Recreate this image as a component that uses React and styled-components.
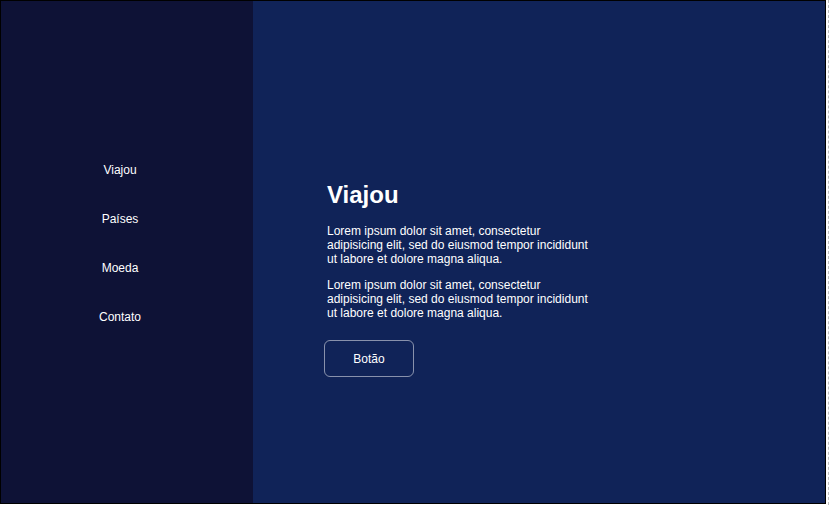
import React from "react";
import styled, { createGlobalStyle } from "styled-components";

const Global = createGlobalStyle`
  html, body { margin: 0; padding: 0; background: #ffffff; }
  body { font-family: "Liberation Sans", Arial, sans-serif; }
  * { box-sizing: border-box; }
`;

const Page = styled.div`
  display: flex;
  align-items: stretch;
  gap: 1px;
  height: 505px;
`;

const Frame = styled.div`
  display: flex;
  width: 826px;
  height: 504px;
  border: 1px solid #000;
`;

const Guide = styled.div`
  width: 0;
  border-left: 1px dashed #bdbdbd;
  margin-left: 1px;
`;

const Sidebar = styled.nav`
  width: 252px;
  flex-shrink: 0;
  background: #0e1236;
  display: flex;
  flex-direction: column;
  align-items: center;
  padding-top: 162px;
  padding-right: 14px;
  gap: 35px;
`;

const NavItem = styled.a`
  color: #ffffff;
  font-size: 12px;
  line-height: 14px;
  text-decoration: none;
`;

const Main = styled.main`
  flex: 1;
  background: #102358;
  padding: 180px 0 0 74px;
  color: #ffffff;
`;

const Title = styled.h1`
  margin: 0 0 15px;
  font-size: 24px;
  line-height: 28px;
  font-weight: bold;
`;

const Text = styled.p`
  margin: 0 0 12px;
  width: 268px;
  font-size: 12px;
  line-height: 14px;
`;

const Button = styled.button`
  margin: 8px 0 0 -3px;
  width: 90px;
  height: 37px;
  border: 1px solid rgba(255, 255, 255, 0.5);
  border-radius: 6px;
  background: transparent;
  color: #ffffff;
  font-family: inherit;
  font-size: 12px;
  cursor: pointer;
`;

const lorem =
  "Lorem ipsum dolor sit amet, consectetur adipisicing elit, sed do eiusmod tempor incididunt ut labore et dolore magna aliqua.";

export default function App() {
  return (
    <>
      <Global />
      <Page>
        <Frame>
          <Sidebar>
            {["Viajou", "Países", "Moeda", "Contato"].map((t) => (
              <NavItem key={t} href="#">
                {t}
              </NavItem>
            ))}
          </Sidebar>
          <Main>
            <Title>Viajou</Title>
            <Text>{lorem}</Text>
            <Text>{lorem}</Text>
            <Button>Botão</Button>
          </Main>
        </Frame>
        <Guide />
      </Page>
    </>
  );
}
